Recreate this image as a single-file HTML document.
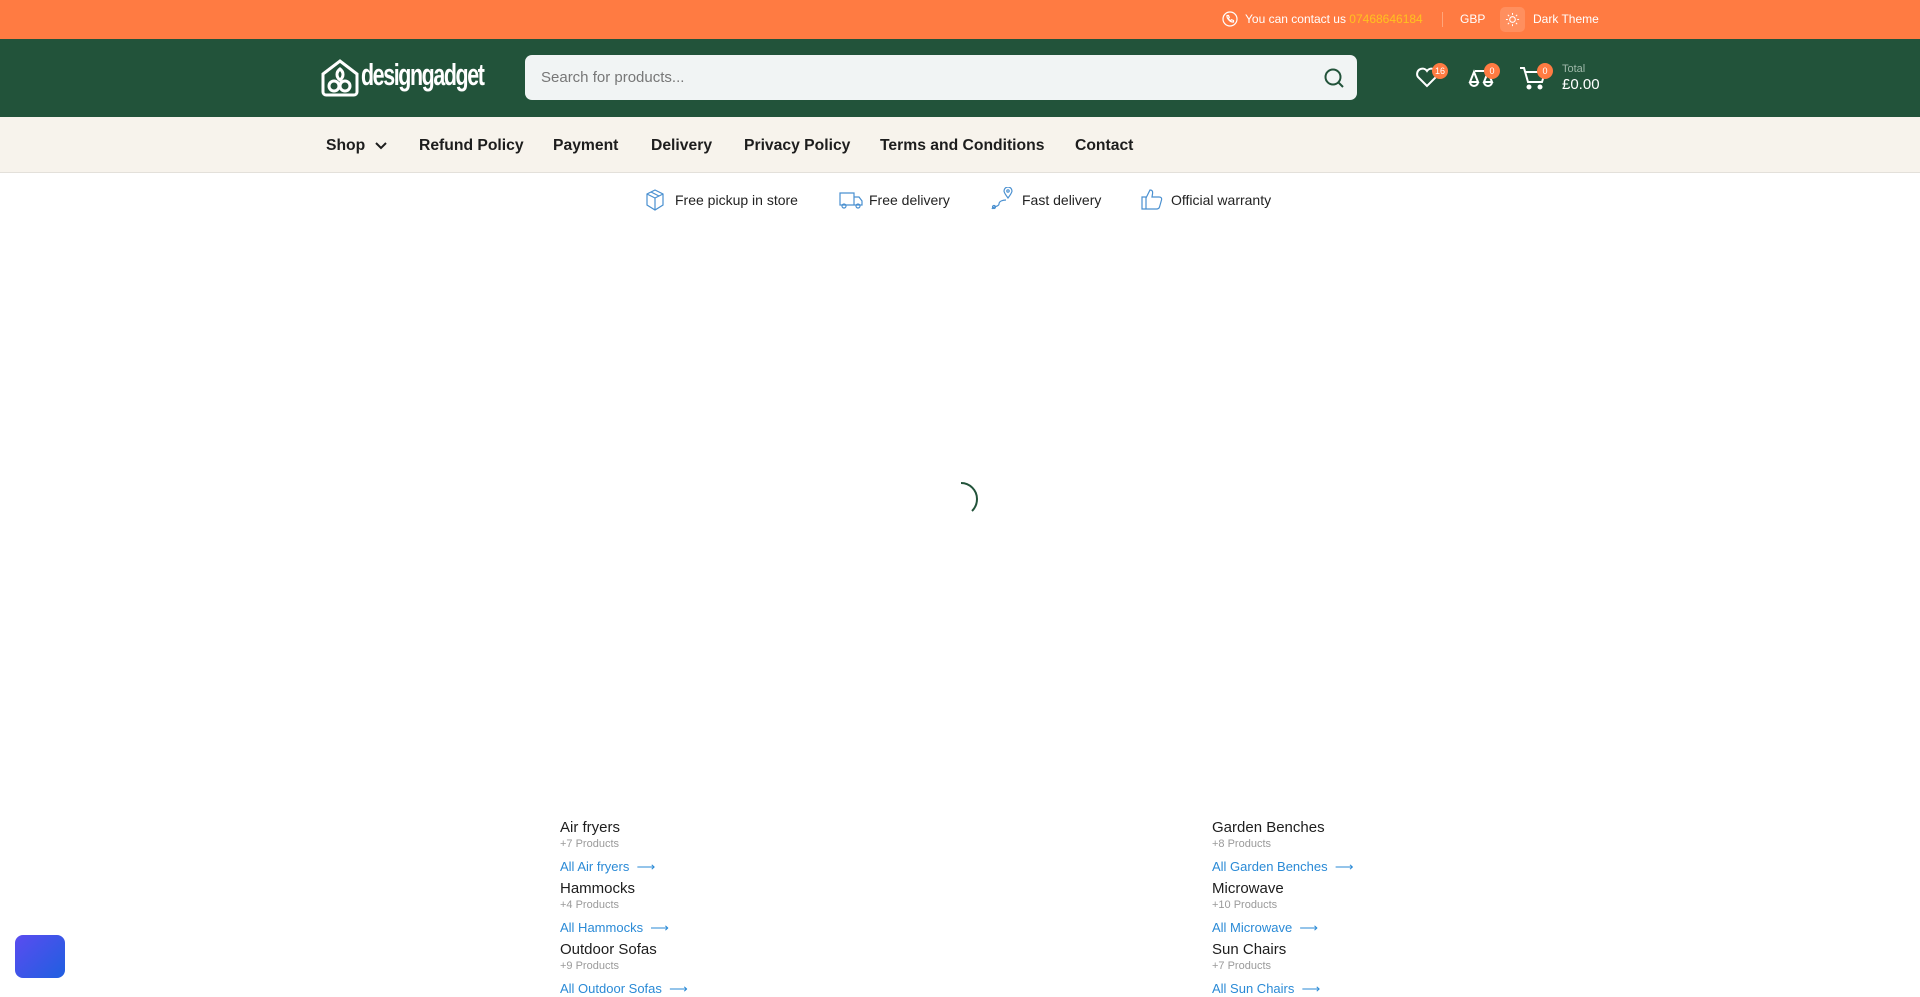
<!DOCTYPE html>
<html><head><meta charset="utf-8"><style>
*{box-sizing:border-box;margin:0;padding:0}
body{width:1920px;height:993px;overflow:hidden;background:#fff;font-family:"Liberation Sans",sans-serif;position:relative;color:#1d1d1d}
.top{position:absolute;left:0;top:0;width:1920px;height:39px;background:#ff7b42;color:#fff;font-size:12px}
.top span{position:absolute;top:12px}
.hdr{position:absolute;left:0;top:39px;width:1920px;height:78px;background:#22533a}
.nav{position:absolute;left:0;top:117px;width:1920px;height:56px;background:#f7f3ec;border-bottom:1px solid #e3e0da}
.nav a{position:absolute;top:20px;font-size:15.7px;font-weight:bold;color:#1d1d1d;text-decoration:none}
.feat{position:absolute;top:192px;font-size:14px;color:#222}
.badge{position:absolute;width:16px;height:16px;border-radius:50%;background:#ff7b42;color:#fff;font-size:9px;text-align:center;line-height:16px}
.cat{position:absolute}
.cat b{display:block;font-weight:normal;font-size:15px;color:#1d1d1d;height:18px}
.cat i{display:block;font-style:normal;font-size:11px;color:#9a9a9a;margin-top:1px;height:18px}
.cat a{display:block;font-size:13px;color:#2a8ad6;text-decoration:none;margin-top:3px}
</style></head><body>
<div class="top">
<svg style="position:absolute;left:1222px;top:11px" width="16" height="16" viewBox="0 0 16 16" fill="none" stroke="#fff" stroke-width="1.2"><circle cx="8" cy="8" r="7"/><path d="M5 4.5l1.5 0 .8 2-1 1c.5 1 1.2 1.7 2.2 2.2l1-1 2 .8v1.5c-3 .5-7-3.5-6.5-6.5z"/></svg>
<span style="left:1245px">You can contact us <span style="position:static;color:#ffc21f">07468646184</span></span>
<div style="position:absolute;left:1442px;top:12px;width:1px;height:15px;background:#ffa57a"></div>
<span style="left:1460px">GBP</span>
<div style="position:absolute;left:1500px;top:7px;width:25px;height:25px;border-radius:5px;background:#ff8f5e"></div>
<svg style="position:absolute;left:1505px;top:12px" width="15" height="15" viewBox="0 0 16 16" stroke="#fff" fill="none" stroke-width="1.1"><circle cx="8" cy="8" r="3"/><path d="M8 1v2M8 13v2M1 8h2M13 8h2M3 3l1.4 1.4M11.6 11.6L13 13M3 13l1.4-1.4M11.6 4.4L13 3"/></svg>
<span style="left:1533px">Dark Theme</span>
</div>
<div class="hdr">
<svg style="position:absolute;left:320px;top:19px" width="40" height="40" viewBox="0 0 40 40" fill="none" stroke="#fff" stroke-width="3"><path d="M3 16L20 3l17 13v18a3 3 0 0 1-3 3H6a3 3 0 0 1-3-3z"/><circle cx="14" cy="28" r="5"/><circle cx="25" cy="28" r="5"/><path d="M20 22c-4-3-4-8 0-11 4 3 4 8 0 11z"/></svg>
<div style="position:absolute;left:361px;top:18px;color:#fff;font-size:31px;font-weight:bold;letter-spacing:-2px;transform:scaleX(.69);transform-origin:left;font-family:'Liberation Sans Narrow','Liberation Sans',sans-serif">designgadget</div>
<div style="position:absolute;left:525px;top:16px;width:832px;height:45px;background:#f1f4f4;border-radius:7px">
<span style="position:absolute;left:16px;top:14px;font-size:15px;color:#777">Search for products...</span>
<svg style="position:absolute;right:12px;top:12px" width="22" height="22" viewBox="0 0 22 22" fill="none" stroke="#22533a" stroke-width="2"><circle cx="10" cy="10" r="7.5"/><path d="M15.5 15.5L20 20"/></svg>
</div>
<svg style="position:absolute;left:1415px;top:27px" width="24" height="22" viewBox="0 0 24 22" fill="none" stroke="#fff" stroke-width="2"><path d="M12 20L3 11a5 5 0 0 1 9-6 5 5 0 0 1 9 6z"/></svg>
<div class="badge" style="left:1432px;top:24px">16</div>
<svg style="position:absolute;left:1468px;top:27px" width="26" height="24" viewBox="0 0 26 24" fill="none" stroke="#fff" stroke-width="2"><path d="M7 5h12M6 6l-4 10h8zM20 6l-4 10h8zM2 16a4 4 0 0 0 8 0M16 16a4 4 0 0 0 8 0"/></svg>
<div class="badge" style="left:1484px;top:24px">0</div>
<svg style="position:absolute;left:1519px;top:26px" width="28" height="26" viewBox="0 0 28 26" fill="none" stroke="#fff" stroke-width="2"><path d="M1 3h4l4 14h14l3-10H7"/><circle cx="10" cy="22" r="1.5" fill="#fff"/><circle cx="21" cy="22" r="1.5" fill="#fff"/></svg>
<div class="badge" style="left:1537px;top:24px">0</div>
<span style="position:absolute;left:1562px;top:24px;font-size:11px;color:#9fb8a9">Total</span>
<span style="position:absolute;left:1562px;top:37px;font-size:15px;color:#fff">£0.00</span>
</div>
<div class="nav">
<a style="left:326px">Shop</a>
<svg style="position:absolute;left:374px;top:24px" width="14" height="10" viewBox="0 0 14 10" fill="none" stroke="#1d1d1d" stroke-width="2"><path d="M2 2l5 5 5-5"/></svg>
<a style="left:419px">Refund Policy</a>
<a style="left:553px">Payment</a>
<a style="left:651px">Delivery</a>
<a style="left:744px">Privacy Policy</a>
<a style="left:880px">Terms and Conditions</a>
<a style="left:1075px">Contact</a>
</div>
<svg style="position:absolute;left:645px;top:189px" width="20" height="22" viewBox="0 0 20 22" fill="none" stroke="#4a90d0" stroke-width="1.2"><path d="M10 1l8 4v11l-8 5-8-5V5zM2 5l8 4 8-4M10 9v12M6 3l8 4"/></svg>
<span class="feat" style="left:675px">Free pickup in store</span>
<svg style="position:absolute;left:839px;top:191px" width="24" height="18" viewBox="0 0 24 18" fill="none" stroke="#4a90d0" stroke-width="1.2"><path d="M1 2h14v12H1zM15 6h5l3 4v4h-8"/><circle cx="5" cy="15" r="2"/><circle cx="19" cy="15" r="2"/></svg>
<span class="feat" style="left:869px">Free delivery</span>
<svg style="position:absolute;left:991px;top:187px" width="24" height="24" viewBox="0 0 24 24" fill="none" stroke="#4a90d0" stroke-width="1.2"><path d="M17 11c-3-4-4-6-4-7a4 4 0 0 1 8 0c0 1-1 3-4 7z"/><circle cx="17" cy="4" r="1.2"/><path d="M15 13c-3 0-7 1-7 4s-6 2-7 5"/><circle cx="3" cy="20" r="1.5"/></svg>
<span class="feat" style="left:1022px">Fast delivery</span>
<svg style="position:absolute;left:1141px;top:188px" width="22" height="22" viewBox="0 0 22 22" fill="none" stroke="#4a90d0" stroke-width="1.2"><path d="M1 9h4v12H1zM5 10l4-8c2 0 3 1 2.5 4L11 9h7c2 0 3 1 2.5 3l-2 7c-.5 1.5-1.5 2-3 2H5"/></svg>
<span class="feat" style="left:1171px">Official warranty</span>
<svg style="position:absolute;left:943px;top:481px" width="36" height="36" viewBox="0 0 36 36" fill="none" stroke="#22533a" stroke-width="2"><path d="M18 2a16 16 0 0 1 16 16c0 5-2 9-5 12"/></svg>
<div class="cat" style="left:560px;top:819px"><b>Air fryers</b><i>+7 Products</i><a>All Air fryers &nbsp;⟶</a></div>
<div class="cat" style="left:560px;top:880px"><b>Hammocks</b><i>+4 Products</i><a>All Hammocks &nbsp;⟶</a></div>
<div class="cat" style="left:560px;top:941px"><b>Outdoor Sofas</b><i>+9 Products</i><a>All Outdoor Sofas &nbsp;⟶</a></div>
<div class="cat" style="left:1212px;top:819px"><b>Garden Benches</b><i>+8 Products</i><a>All Garden Benches &nbsp;⟶</a></div>
<div class="cat" style="left:1212px;top:880px"><b>Microwave</b><i>+10 Products</i><a>All Microwave &nbsp;⟶</a></div>
<div class="cat" style="left:1212px;top:941px"><b>Sun Chairs</b><i>+7 Products</i><a>All Sun Chairs &nbsp;⟶</a></div>
<div style="position:absolute;left:15px;top:935px;width:50px;height:43px;border-radius:8px;background:linear-gradient(135deg,#5a4cf0,#1f5fe0)"></div>
</body></html>
